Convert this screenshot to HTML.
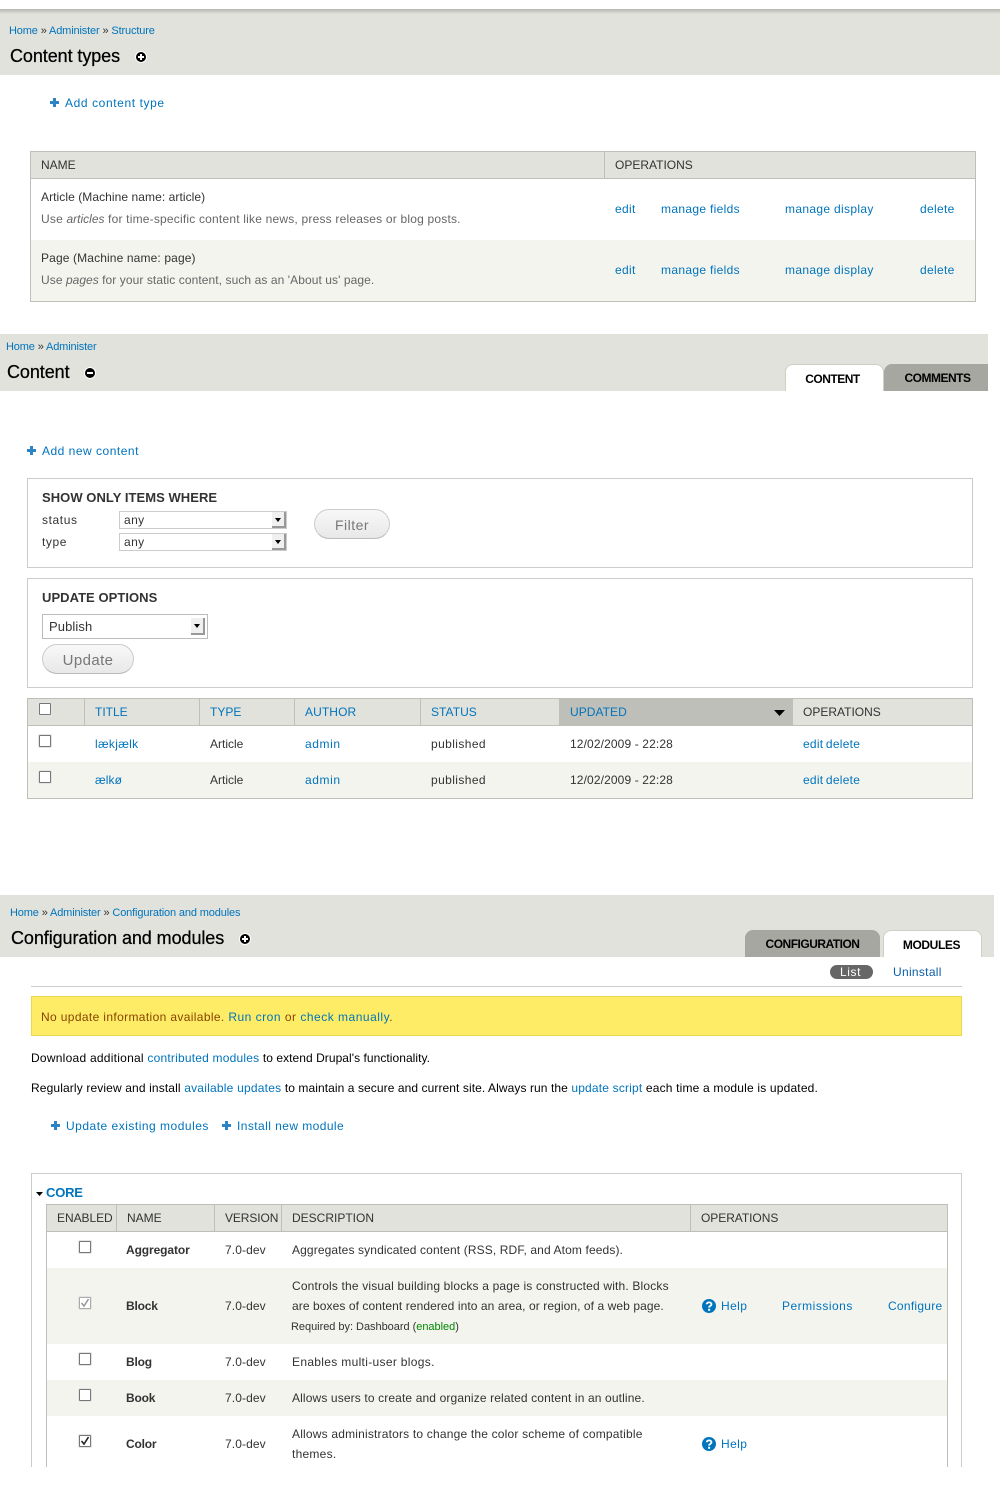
<!DOCTYPE html>
<html><head><meta charset="utf-8"><title>Drupal admin</title>
<style>
html,body{margin:0;padding:0;background:#fff}
body{width:1000px;height:1500px;position:relative;overflow:hidden;font-family:"Liberation Sans",sans-serif;font-size:12px;color:#333}
.b,.t,svg{position:absolute}
.t{white-space:nowrap;line-height:16px;letter-spacing:.6px}
.l{color:#0074bd}
.o{letter-spacing:.33px}
.g{color:#666}
.k{color:#000;letter-spacing:.05px}
.h{color:#333;letter-spacing:0}
.s{font-weight:bold;letter-spacing:-.2px;color:#333}
.v{letter-spacing:.1px}
.cr{font-size:11px;letter-spacing:-.14px;color:#0074bd}
.ti{font-size:18px;letter-spacing:-.08px;color:#000;line-height:24px;-webkit-text-stroke:.25px #000}
.hd{background:#e1e2dc}
.ln{background:#bebfb9}
.alt{background:#f3f4ee}
.fs{border:1px solid #ccc;box-sizing:border-box}
.sel{position:absolute;box-sizing:border-box;border:1px solid #ccc;background:#fff}
.arr{position:absolute;right:0;top:0;width:14px;background:#f0f0f0;border-right:2px solid #999;border-bottom:2px solid #999;box-sizing:border-box}
.arr:after{content:"";position:absolute;left:3px;top:6px;border-left:3px solid transparent;border-right:3px solid transparent;border-top:4px solid #000}
.btn{position:absolute;box-sizing:border-box;border:1px solid #ccc;border-bottom-color:#bbb;border-radius:15px;background:linear-gradient(#f8f8f8,#e8e8e8);color:#777;text-align:center;font-size:14px;letter-spacing:.5px}
.cb{position:absolute;width:12px;height:12px;box-sizing:border-box;border:1px solid #777;background:#fff;border-radius:1px;box-shadow:0 0 0 1px #e4e4e4}
.tab{position:absolute;box-sizing:border-box;border-radius:8px 8px 0 0;text-align:center;font-weight:bold;font-size:12px;color:#000;letter-spacing:-.5px}
.on{background:#fff;border:1px solid #cfcfc8;border-bottom:0}
.off{background:#a6a7a1}
.ic{position:absolute;width:10px;height:10px;background:#000;border-radius:50%;border:1px solid #fff;box-sizing:content-box}
.d{letter-spacing:.15px}
i{letter-spacing:0}
</style></head><body>

<!-- SECTION 1 -->
<div class="b hd" style="left:0;top:9px;width:1000px;height:66px"></div>
<div class="b" style="left:0;top:9px;width:1000px;height:5px;background:linear-gradient(#b5b5af,#e1e2dc)"></div>
<div class="t cr" style="left:9px;top:23px">Home <span style="color:#333">»</span> Administer <span style="color:#333">»</span> Structure</div>
<div class="t ti" style="left:10px;top:44px">Content types</div>
<div class="ic" style="left:135px;top:51px"></div>
<div class="b" style="left:138px;top:56px;width:6px;height:2px;background:#fff"></div>
<div class="b" style="left:140px;top:54px;width:2px;height:6px;background:#fff"></div>

<svg style="left:50px;top:98px" width="9" height="9"><path d="M3 0h3v3h3v3H6v3H3V6H0V3h3z" fill="#2b85c5"/></svg>
<div class="t l" style="left:65px;top:95px">Add content type</div>

<div class="b" style="left:30px;top:151px;width:946px;height:151px;box-sizing:border-box;border:1px solid #bebfb9"></div>
<div class="b hd" style="left:31px;top:152px;width:944px;height:26px"></div>
<div class="b ln" style="left:31px;top:178px;width:944px;height:1px"></div>
<div class="b ln" style="left:604px;top:152px;width:1px;height:26px"></div>
<div class="b alt" style="left:31px;top:240px;width:944px;height:61px"></div>
<div class="t h" style="left:41px;top:157px">NAME</div>
<div class="t h" style="left:615px;top:157px">OPERATIONS</div>
<div class="t" style="left:41px;top:189px;letter-spacing:.07px">Article (Machine name: article)</div>
<div class="t g" style="left:41px;top:211px;letter-spacing:.2px">Use <i>articles</i> for time-specific content like news, press releases or blog posts.</div>
<div class="t" style="left:41px;top:250px;letter-spacing:.13px">Page (Machine name: page)</div>
<div class="t g" style="left:41px;top:272px;letter-spacing:.08px">Use <i>pages</i> for your static content, such as an 'About us' page.</div>
<div class="t l o" style="left:615px;top:201px">edit</div><div class="t l o" style="left:661px;top:201px">manage fields</div><div class="t l o" style="left:785px;top:201px">manage display</div><div class="t l o" style="left:920px;top:201px">delete</div>
<div class="t l o" style="left:615px;top:262px">edit</div><div class="t l o" style="left:661px;top:262px">manage fields</div><div class="t l o" style="left:785px;top:262px">manage display</div><div class="t l o" style="left:920px;top:262px">delete</div>

<!-- SECTION 2 -->
<div class="b hd" style="left:0;top:334px;width:988px;height:57px"></div>
<div class="t cr" style="left:6px;top:339px">Home <span style="color:#333">»</span> Administer</div>
<div class="t ti" style="left:7px;top:360px">Content</div>
<div class="ic" style="left:84px;top:367px"></div>
<div class="b" style="left:87px;top:372px;width:6px;height:2px;background:#fff"></div>
<div class="tab on" style="left:785px;top:364px;width:99px;height:27px;line-height:29px;text-indent:-4px">CONTENT</div>
<div class="tab off" style="left:884px;top:364px;width:104px;height:27px;line-height:29px;border-radius:8px 0 0 0;text-indent:3px">COMMENTS</div>

<svg style="left:27px;top:446px" width="9" height="9"><path d="M3 0h3v3h3v3H6v3H3V6H0V3h3z" fill="#2b85c5"/></svg>
<div class="t l" style="left:42px;top:443px;letter-spacing:.5px">Add new content</div>

<div class="b fs" style="left:27px;top:478px;width:946px;height:90px"></div>
<div class="t s" style="left:42px;top:490px;font-size:13px;letter-spacing:.05px">SHOW ONLY ITEMS WHERE</div>
<div class="t" style="left:42px;top:512px">status</div>
<div class="t" style="left:42px;top:534px">type</div>
<div class="sel" style="left:119px;top:511px;width:168px;height:18px"><div class="t" style="left:4px;top:0;letter-spacing:.4px">any</div><div class="arr" style="height:16px"></div></div>
<div class="sel" style="left:119px;top:533px;width:168px;height:18px"><div class="t" style="left:4px;top:0;letter-spacing:.4px">any</div><div class="arr" style="height:16px"></div></div>
<div class="btn" style="left:314px;top:509px;width:76px;height:30px;line-height:30px">Filter</div>

<div class="b fs" style="left:27px;top:578px;width:946px;height:110px"></div>
<div class="t s" style="left:42px;top:590px;font-size:13px;letter-spacing:.05px">UPDATE OPTIONS</div>
<div class="sel" style="left:42px;top:614px;width:166px;height:25px;border-color:#bbb"><div class="t" style="left:6px;top:4px;font-size:13px;letter-spacing:.1px">Publish</div><div class="arr" style="top:3px;right:2px;height:17px"></div></div>
<div class="btn" style="left:42px;top:644px;width:92px;height:30px;line-height:30px;font-size:15px;letter-spacing:.4px"><span style="position:relative;top:1px">Update</span></div>

<div class="b" style="left:27px;top:698px;width:946px;height:101px;box-sizing:border-box;border:1px solid #bebfb9"></div>
<div class="b hd" style="left:28px;top:699px;width:944px;height:26px"></div>
<div class="b ln" style="left:28px;top:725px;width:944px;height:1px"></div>
<div class="b ln" style="left:84px;top:699px;width:1px;height:26px"></div>
<div class="b ln" style="left:199px;top:699px;width:1px;height:26px"></div>
<div class="b ln" style="left:294px;top:699px;width:1px;height:26px"></div>
<div class="b ln" style="left:420px;top:699px;width:1px;height:26px"></div>
<div class="b" style="left:559px;top:699px;width:234px;height:26px;background:#bebfb9"></div>
<svg style="left:774px;top:710px" width="11" height="6"><path d="M0 0h11L5.500 6z" fill="#000"/></svg>
<div class="b alt" style="left:28px;top:762px;width:944px;height:36px"></div>
<div class="cb" style="left:39px;top:703px"></div>
<div class="cb" style="left:39px;top:735px"></div>
<div class="cb" style="left:39px;top:771px"></div>
<div class="t l" style="left:95px;top:704px;letter-spacing:0">TITLE</div>
<div class="t l" style="left:210px;top:704px;letter-spacing:0">TYPE</div>
<div class="t l" style="left:305px;top:704px;letter-spacing:.1px">AUTHOR</div>
<div class="t l" style="left:431px;top:704px;letter-spacing:.05px">STATUS</div>
<div class="t l" style="left:570px;top:704px;letter-spacing:.05px">UPDATED</div>
<div class="t h" style="left:803px;top:704px">OPERATIONS</div>
<div class="t l" style="left:95px;top:736px;letter-spacing:.3px">lækjælk</div><div class="t" style="left:210px;top:736px;letter-spacing:0">Article</div><div class="t l" style="left:305px;top:736px">admin</div><div class="t" style="left:431px;top:736px;letter-spacing:.4px">published</div><div class="t" style="left:570px;top:736px;letter-spacing:.12px">12/02/2009 - 22:28</div><div class="t l" style="left:803px;top:736px;letter-spacing:.25px;word-spacing:-1px">edit delete</div>
<div class="t l" style="left:95px;top:772px;letter-spacing:.1px">ælkø</div><div class="t" style="left:210px;top:772px;letter-spacing:0">Article</div><div class="t l" style="left:305px;top:772px">admin</div><div class="t" style="left:431px;top:772px;letter-spacing:.4px">published</div><div class="t" style="left:570px;top:772px;letter-spacing:.12px">12/02/2009 - 22:28</div><div class="t l" style="left:803px;top:772px;letter-spacing:.25px;word-spacing:-1px">edit delete</div>

<!-- SECTION 3 -->
<div class="b hd" style="left:0;top:895px;width:994px;height:62px"></div>
<div class="t cr" style="left:10px;top:905px">Home <span style="color:#333">»</span> Administer <span style="color:#333">»</span> Configuration and modules</div>
<div class="t ti" style="left:11px;top:926px">Configuration and modules</div>
<div class="ic" style="left:239px;top:933px"></div>
<div class="b" style="left:242px;top:938px;width:6px;height:2px;background:#fff"></div>
<div class="b" style="left:244px;top:936px;width:2px;height:6px;background:#fff"></div>
<div class="tab off" style="left:745px;top:930px;width:135px;height:27px;line-height:29px">CONFIGURATION</div>
<div class="tab on" style="left:883px;top:930px;width:99px;height:27px;line-height:29px;letter-spacing:-.4px;text-indent:-2px">MODULES</div>

<div class="b" style="left:830px;top:965px;width:43px;height:14px;border-radius:7px;background:#666"></div>
<div class="t" style="left:829px;top:964px;width:43px;text-align:center;color:#fff">List</div>
<div class="t" style="left:893px;top:964px;color:#0a5fa8;letter-spacing:.3px">Uninstall</div>
<div class="b" style="left:31px;top:986px;width:931px;height:1px;background:#ccc"></div>

<div class="b" style="left:31px;top:996px;width:931px;height:40px;box-sizing:border-box;background:#feec66;border:1px solid #ecd84e"></div>
<div class="t" style="left:41px;top:1009px;color:#884400;letter-spacing:.36px">No update information available. <span style="letter-spacing:.5px"><span class="l">Run cron</span> or <span class="l">check manually</span>.</span></div>

<div class="t k" style="left:31px;top:1050px;letter-spacing:.25px">Download additional <span class="l" style="letter-spacing:.2px">contributed modules</span> <span style="letter-spacing:.05px">to extend Drupal's functionality.</span></div>
<div class="t k" style="left:31px;top:1080px;letter-spacing:.13px">Regularly review and install <span class="l" style="letter-spacing:.22px">available updates</span> <span style="letter-spacing:.08px">to maintain a secure and current site. Always run the</span> <span class="l" style="letter-spacing:.18px">update script</span> <span style="letter-spacing:.18px">each time a module is updated.</span></div>

<svg style="left:51px;top:1121px" width="9" height="9"><path d="M3 0h3v3h3v3H6v3H3V6H0V3h3z" fill="#2b85c5"/></svg>
<div class="t l" style="left:66px;top:1118px;letter-spacing:.5px">Update existing modules</div>
<svg style="left:222px;top:1121px" width="9" height="9"><path d="M3 0h3v3h3v3H6v3H3V6H0V3h3z" fill="#2b85c5"/></svg>
<div class="t l" style="left:237px;top:1118px;letter-spacing:.43px">Install new module</div>

<!-- fieldset, clipped at 1467 -->
<div class="b" style="left:31px;top:1173px;width:931px;height:294px;box-sizing:border-box;border:1px solid #ccc;border-bottom:0"></div>
<svg style="left:36px;top:1192px" width="7" height="4"><path d="M0 0h7L3.500 4z" fill="#000"/></svg>
<div class="t l" style="left:46px;top:1185px;font-size:13px;font-weight:bold;letter-spacing:-.2px">CORE</div>

<div class="b" style="left:46px;top:1204px;width:902px;height:263px;box-sizing:border-box;border:1px solid #bebfb9;border-bottom:0"></div>
<div class="b hd" style="left:47px;top:1205px;width:900px;height:26px"></div>
<div class="b ln" style="left:47px;top:1231px;width:900px;height:1px"></div>
<div class="b ln" style="left:116px;top:1205px;width:1px;height:26px"></div>
<div class="b ln" style="left:214px;top:1205px;width:1px;height:26px"></div>
<div class="b ln" style="left:281px;top:1205px;width:1px;height:26px"></div>
<div class="b ln" style="left:690px;top:1205px;width:1px;height:26px"></div>
<div class="b alt" style="left:47px;top:1268px;width:900px;height:76px"></div>
<div class="b alt" style="left:47px;top:1380px;width:900px;height:36px"></div>
<div class="t h" style="left:57px;top:1210px;letter-spacing:-.05px">ENABLED</div>
<div class="t h" style="left:127px;top:1210px">NAME</div>
<div class="t h" style="left:225px;top:1210px;letter-spacing:-.1px">VERSION</div>
<div class="t h" style="left:292px;top:1210px">DESCRIPTION</div>
<div class="t h" style="left:701px;top:1210px;letter-spacing:-.05px">OPERATIONS</div>

<div class="cb" style="left:79px;top:1241px"></div>
<div class="cb" style="left:79px;top:1297px;border-color:#aaa"></div>
<svg style="left:80px;top:1298px" width="10" height="10"><path d="M1.500 5l2.500 3L8.500 1" fill="none" stroke="#999" stroke-width="1.600"/></svg>
<div class="cb" style="left:79px;top:1353px"></div>
<div class="cb" style="left:79px;top:1389px"></div>
<div class="cb" style="left:79px;top:1435px"></div>
<svg style="left:80px;top:1436px" width="10" height="10"><path d="M1.500 5l2.500 3L8.500 1" fill="none" stroke="#222" stroke-width="1.600"/></svg>

<div class="t s" style="left:126px;top:1242px;letter-spacing:-.1px">Aggregator</div>
<div class="t s" style="left:126px;top:1298px">Block</div>
<div class="t s" style="left:126px;top:1354px">Blog</div>
<div class="t s" style="left:126px;top:1390px">Book</div>
<div class="t s" style="left:126px;top:1436px">Color</div>
<div class="t v" style="left:225px;top:1242px">7.0-dev</div>
<div class="t v" style="left:225px;top:1298px">7.0-dev</div>
<div class="t v" style="left:225px;top:1354px">7.0-dev</div>
<div class="t v" style="left:225px;top:1390px">7.0-dev</div>
<div class="t v" style="left:225px;top:1436px">7.0-dev</div>
<div class="t" style="left:292px;top:1242px;letter-spacing:.12px">Aggregates syndicated content (RSS, RDF, and Atom feeds).</div>
<div class="t" style="left:292px;top:1278px;letter-spacing:.17px">Controls the visual building blocks a page is constructed with. Blocks</div>
<div class="t" style="left:292px;top:1298px;letter-spacing:.08px">are boxes of content rendered into an area, or region, of a web page.</div>
<div class="t" style="left:291px;top:1319px;font-size:11px;letter-spacing:-.03px">Required by: Dashboard (<span style="color:#080">enabled</span>)</div>
<div class="t" style="left:292px;top:1354px;letter-spacing:.32px">Enables multi-user blogs.</div>
<div class="t" style="left:292px;top:1390px;letter-spacing:.13px">Allows users to create and organize related content in an outline.</div>
<div class="t" style="left:292px;top:1426px;letter-spacing:.19px">Allows administrators to change the color scheme of compatible</div>
<div class="t" style="left:292px;top:1446px;letter-spacing:.25px">themes.</div>

<svg style="left:702px;top:1299px" width="14" height="14"><circle cx="7" cy="7" r="7" fill="#0074bd"/><path d="M4.700 5.300C4.700 2.700 9.500 2.700 9.500 5.300C9.500 7 7.100 6.800 7.100 8.600" fill="none" stroke="#fff" stroke-width="1.800"/><rect x="6.100" y="9.800" width="2" height="2" fill="#fff"/></svg>
<div class="t l" style="left:721px;top:1298px;letter-spacing:.4px">Help</div>
<div class="t l" style="left:782px;top:1298px;letter-spacing:.5px">Permissions</div>
<div class="t l" style="left:888px;top:1298px;letter-spacing:.27px">Configure</div>
<svg style="left:702px;top:1437px" width="14" height="14"><circle cx="7" cy="7" r="7" fill="#0074bd"/><path d="M4.700 5.300C4.700 2.700 9.500 2.700 9.500 5.300C9.500 7 7.100 6.800 7.100 8.600" fill="none" stroke="#fff" stroke-width="1.800"/><rect x="6.100" y="9.800" width="2" height="2" fill="#fff"/></svg>
<div class="t l" style="left:721px;top:1436px;letter-spacing:.4px">Help</div>

</body></html>
